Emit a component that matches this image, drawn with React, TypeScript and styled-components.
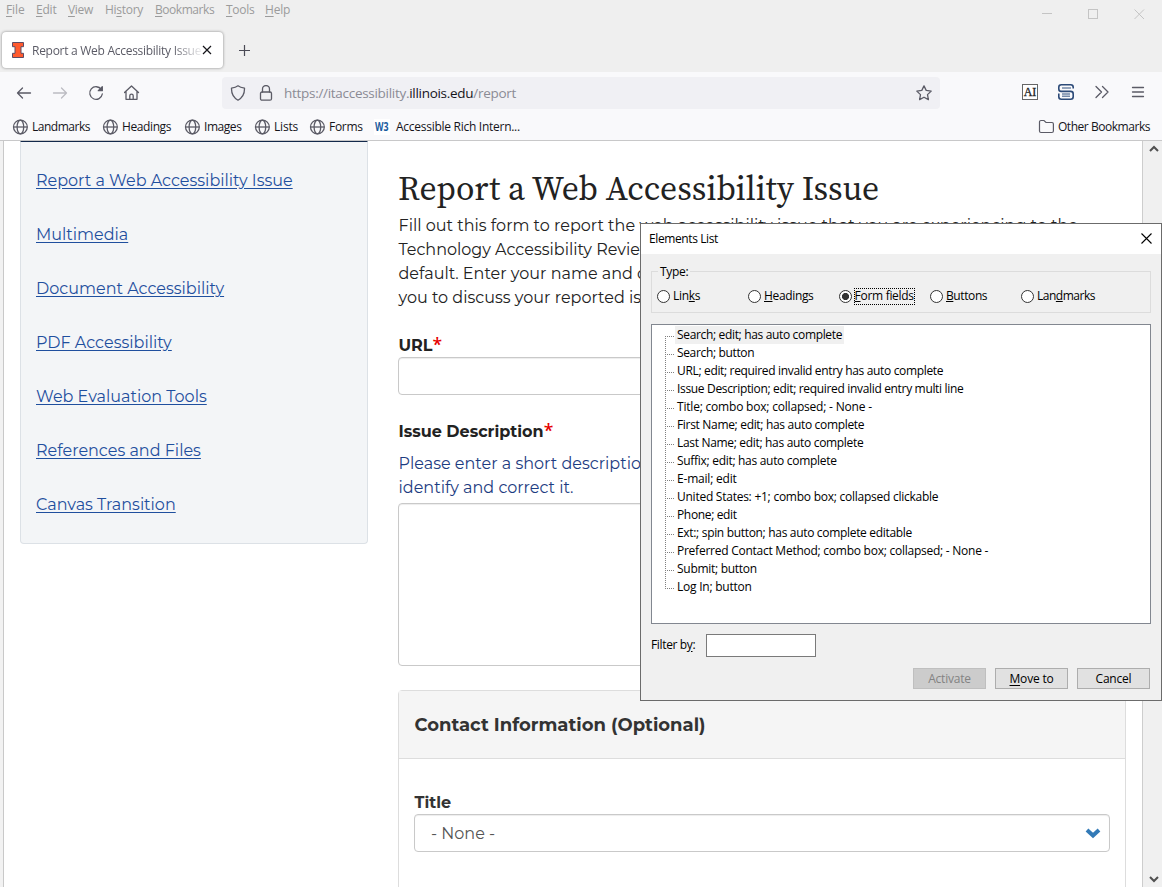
import React from 'react';
import styled, { createGlobalStyle, css } from 'styled-components';

const ui = `"Segoe UI", "Open Sans", "Noto Sans", sans-serif`;
const body = `Montserrat, Inter, sans-serif`;

const GlobalStyle = createGlobalStyle`
  * { box-sizing: border-box; }
  body { margin: 0; background: #fff; overflow: hidden; }
`;

const Browser = styled.div`
  position: relative;
  width: 1162px;
  height: 887px;
  display: flex;
  flex-direction: column;
  overflow: hidden;
  font: 12px/16px ${ui};
`;

const Text = styled.span<{ $ls?: number }>`
  white-space: nowrap;
  letter-spacing: ${(p) => p.$ls ?? 0}px;
`;

/* ---------- window chrome ---------- */

const TitleArea = styled.div`
  height: 72px;
  flex: none;
  background: #efefef;
  display: flex;
  justify-content: space-between;
`;

const TitleLeft = styled.div`
  display: flex;
  flex-direction: column;
`;

const MenuBar = styled.div`
  display: flex;
  height: 32px;
  padding: 2px 0 0 6px;
  color: #9b9b9b;
`;

const MenuItem = styled.span<{ $w: number; $ls: number }>`
  width: ${(p) => p.$w}px;
  letter-spacing: ${(p) => p.$ls}px;
  white-space: nowrap;
  u { text-underline-offset: 2px; }
`;

const WindowButtons = styled.div`
  display: flex;
  gap: 35px;
  padding: 8px 17px 0 0;
`;

const TabStrip = styled.div`
  display: flex;
  align-items: center;
  height: 36px;
  padding-left: 2px;
`;

const Tab = styled.div`
  width: 221px;
  height: 36px;
  display: flex;
  align-items: center;
  padding: 0 9px 0 9px;
  background: #fff;
  border-radius: 4px;
  box-shadow: 0 0 3px rgba(0, 0, 0, 0.45);
  color: #5b5b66;
`;

const TabTitle = styled.span`
  width: 170px;
  margin: 2px 0 0 7px;
  white-space: nowrap;
  letter-spacing: -0.28px;
  mask-image: linear-gradient(to right, #000 140px, transparent 172px);
`;

const NewTab = styled.svg`
  margin: 1px 0 0 16px;
`;

const NavBar = styled.div`
  height: 41px;
  flex: none;
  background: #f9f9fb;
  display: flex;
  align-items: center;
  padding: 0 16px 0 16px;
`;

const NavButtons = styled.div`
  display: flex;
  gap: 20px;
  width: 206px;
  color: #5b5b66;
`;

const UrlBar = styled.div`
  width: 718px;
  height: 32px;
  border-radius: 4px;
  background: #f0f0f4;
  display: flex;
  align-items: center;
  padding: 0 8px;
  gap: 12px;
  color: #5b5b66;
`;

const Url = styled.span`
  flex: 1;
  margin-left: -2px;
  font-size: 13.5px;
  line-height: 20px;
  letter-spacing: -0.29px;
  color: #8b8b94;
  b { font-weight: 400; color: #15141a; }
`;

const ToolIcons = styled.div`
  display: flex;
  gap: 20px;
  margin: -2px 0 0 auto;
  color: #5b5b66;
`;

const BookmarksBar = styled.div`
  height: 28px;
  flex: none;
  background: #f9f9fb;
  border-bottom: 1px solid #c8c8c9;
  display: flex;
  align-items: center;
  padding: 0 12px 0 12px;
  color: #15141a;
`;

const Bookmark = styled.div<{ $w?: number; $gap?: number }>`
  display: flex;
  align-items: center;
  gap: ${(p) => p.$gap ?? 4}px;
  ${(p) => (p.$w ? css`width: ${p.$w}px;` : css`margin-left: auto;`)}
`;

/* ---------- page ---------- */

const Viewport = styled.div`
  flex: 1;
  min-height: 0;
  display: flex;
  background: #fff;
`;

const LeftEdge = styled.div`
  width: 4px;
  background: #f2f2f2;
  border-right: 1px solid #c9c9c9;
`;

const Page = styled.div`
  flex: 1;
  display: flex;
  align-items: flex-start;
  padding-left: 16px;
  overflow: hidden;
  font: 16px/24px ${body};
  color: #222;
`;

const ScrollBar = styled.div`
  width: 20px;
  background: #f0f0f0;
  border-left: 1px solid #cdcdcd;
  display: flex;
  flex-direction: column;
  justify-content: space-between;
  align-items: center;
  padding: 4px 0 4px 2px;
`;

const SideNav = styled.nav`
  width: 348px;
  height: 403px;
  padding: 27px 15px 0;
  background: #f3f5f7;
  border: 1px solid #dce1e6;
  border-top: 1px solid #13294b;
  border-radius: 0 0 4px 4px;
  display: flex;
  flex-direction: column;
  gap: 30px;
`;

const SideLink = styled.a`
  color: #1f4f9e;
  text-decoration: underline;
  text-underline-offset: 2px;
  white-space: nowrap;
`;

const Main = styled.main`
  width: 728px;
  margin-left: 30px;
  flex: none;
`;

const Heading = styled.h1`
  margin: 0;
  padding-top: 25px;
  height: 73px;
  font: 400 33.6px/44px "Source Serif 4", "Noto Serif", "Liberation Serif", serif;
`;

const Line = styled.div`
  white-space: nowrap;
  padding-left: 0.5px;
`;

const Label = styled.label<{ $top: number }>`
  display: block;
  margin: ${(p) => p.$top}px 0 -1px;
  padding-left: 0.5px;
  font-weight: 700;
  line-height: 24px;
`;

const Required = styled.span`
  color: #e60000;
  font-family: "Open Sans", sans-serif;
  font-size: 17.5px;
  font-weight: 600;
  line-height: 1;
`;

const field = css`
  border: 1px solid #c9c9c9;
  border-radius: 4px;
  background: #fff;
  box-shadow: inset 0 1px 1px rgba(0, 0, 0, 0.075);
`;

const Input = styled.div<{ $h: number }>`
  ${field}
  height: ${(p) => p.$h}px;
`;

const Help = styled.div`
  margin: 9px 0 3px;
  color: #1d3c81;
`;

const Fieldset = styled.section`
  margin-top: 24px;
  height: 300px;
  border: 1px solid #ddd;
  border-radius: 4px 4px 0 0;
`;

const FieldsetTitle = styled.h2`
  margin: 0;
  height: 68px;
  padding: 0 15.5px;
  display: flex;
  align-items: center;
  background: #f5f5f5;
  border-bottom: 1px solid #ddd;
  font-size: 18px;
  font-weight: 700;
  color: #333;
`;

const FieldsetBody = styled.div`
  padding: 0 15px;
  color: #333;
`;

const Select = styled.div`
  ${field}
  height: 38px;
  padding: 1px 8px 0 16px;
  display: flex;
  align-items: center;
  justify-content: space-between;
  color: #555;
`;

/* ---------- dialog ---------- */

const Dialog = styled.div`
  position: absolute;
  left: 640px;
  top: 223px;
  width: 522px;
  height: 478px;
  border: 1px solid #6b6b6b;
  background: #f0f0f0;
  color: #000;
  display: flex;
  flex-direction: column;
`;

const DialogTitle = styled.div`
  height: 30px;
  flex: none;
  background: #fff;
  padding: 0 9px 0 8px;
  display: flex;
  align-items: center;
  justify-content: space-between;
`;

const CloseIcon = styled.svg`
  margin: -2px 0.5px 0 0;
`;

const DialogBody = styled.div`
  flex: 1;
  padding: 17px 10px 11px;
  display: flex;
  flex-direction: column;
`;

const Group = styled.div`
  height: 42px;
  border: 1px solid #dcdcdc;
`;

const Legend = styled.div`
  width: 32px;
  height: 16px;
  margin: -8px 0 0 6px;
  padding-left: 2px;
  background: #f0f0f0;
  letter-spacing: -0.3px;
`;

const Radios = styled.div`
  display: flex;
  padding: 8px 0 0 5px;
`;

const Radio = styled.div`
  width: 91px;
  display: flex;
  align-items: center;
  gap: 1px;
`;

const Dot = styled.span<{ $on?: boolean }>`
  flex: none;
  width: 13px;
  height: 13px;
  margin-top: -1px;
  border: 1px solid #333;
  border-radius: 50%;
  background: ${(p) => (p.$on ? 'radial-gradient(circle, #333 3.2px, #fff 3.9px)' : '#fff')};
`;

const RadioText = styled.span<{ $focus?: boolean; $ls: number }>`
  flex: none;
  height: 17px;
  line-height: 14px;
  padding: 0 0 0 1px;
  border: 1px ${(p) => (p.$focus ? 'dotted #000' : 'solid transparent')};
  white-space: nowrap;
  letter-spacing: ${(p) => p.$ls}px;
  margin-right: -10px;
  ${(p) => p.$focus && css`margin-left: 0.6px; padding: 0;`}
`;

const Tree = styled.div`
  margin-top: 11px;
  height: 300px;
  border: 1px solid #828790;
  background: #fff;
  padding: 1px 0 0 13px;
`;

const TreeItem = styled.div`
  height: 18px;
  display: flex;
  align-items: center;
`;

const Branch = styled.svg`
  flex: none;
  margin-right: 1px;
`;

const TreeText = styled.span<{ $sel?: boolean; $ls: number }>`
  height: 18px;
  line-height: 18px;
  padding: 0 2px;
  white-space: nowrap;
  letter-spacing: ${(p) => p.$ls}px;
  background: ${(p) => (p.$sel ? '#f0f0f0' : 'transparent')};
`;

const FilterRow = styled.div`
  display: flex;
  align-items: center;
  margin-top: 10px;
`;

const FilterLabel = styled.span`
  width: 55px;
  margin-top: -2px;
  letter-spacing: -0.35px;
  u { text-underline-offset: 2px; }
`;

const FilterInput = styled.div`
  width: 110px;
  height: 23px;
  border: 1px solid #7a7a7a;
  background: #fff;
`;

const Buttons = styled.div`
  display: flex;
  justify-content: flex-end;
  gap: 9px;
  margin-top: 11px;
  padding-right: 1px;
`;

const Button = styled.div<{ $disabled?: boolean }>`
  width: 73px;
  height: 21px;
  border: 1px solid ${(p) => (p.$disabled ? '#bfbfbf' : '#adadad')};
  background: ${(p) => (p.$disabled ? '#ccc' : '#e1e1e1')};
  color: ${(p) => (p.$disabled ? '#838383' : '#000')};
  text-align: center;
  line-height: 20px;
  letter-spacing: -0.2px;
  u { text-underline-offset: 2px; }
`;

/* ---------- icons ---------- */

const Globe = () => (
  <svg width="16" height="16" viewBox="0 0 16 16" fill="none" stroke="#5b5b66" strokeWidth="1.3">
    <circle cx="8.4" cy="8" r="6.9" />
    <ellipse cx="8.4" cy="8" rx="3.3" ry="6.9" />
    <path d="M1.6 8h13.6" />
  </svg>
);

const NavIcon = ({ children, faded }: { children: React.ReactNode; faded?: boolean }) => (
  <svg width="16" height="16" viewBox="0 0 16 16" fill="none" stroke={faded ? '#bcbcc2' : '#5b5b66'} strokeWidth="1.3" strokeLinecap="round" strokeLinejoin="round">
    {children}
  </svg>
);

const menus: [React.ReactNode, number, number][] = [
  [<><u>F</u>ile</>, 30, -0.1],
  [<><u>E</u>dit</>, 32, -0.2],
  [<><u>V</u>iew</>, 37, -0.3],
  [<>Hi<u>s</u>tory</>, 50, -0.29],
  [<><u>B</u>ookmarks</>, 71, -0.45],
  [<><u>T</u>ools</>, 39, -0.3],
  [<><u>H</u>elp</>, 30, -0.2],
];

const bookmarks: [string, number, number][] = [
  ['Landmarks', 90, -0.48],
  ['Headings', 82, -0.4],
  ['Images', 70, -0.45],
  ['Lists', 55, -0.2],
  ['Forms', 65, -0.3],
];

const sideLinks = [
  'Report a Web Accessibility Issue',
  'Multimedia',
  'Document Accessibility',
  'PDF Accessibility',
  'Web Evaluation Tools',
  'References and Files',
  'Canvas Transition',
];

const elements: [string, number][] = [
  ['Search; edit; has auto complete', -0.34],
  ['Search; button', -0.35],
  ['URL; edit; required invalid entry has auto complete', -0.34],
  ['Issue Description; edit; required invalid entry multi line', -0.33],
  ['Title; combo box; collapsed; - None -', -0.2],
  ['First Name; edit; has auto complete', -0.32],
  ['Last Name; edit; has auto complete', -0.32],
  ['Suffix; edit; has auto complete', -0.3],
  ['E-mail; edit', -0.2],
  ['United States: +1; combo box; collapsed clickable', -0.25],
  ['Phone; edit', -0.35],
  ['Ext:; spin button; has auto complete editable', -0.32],
  ['Preferred Contact Method; combo box; collapsed; - None -', -0.25],
  ['Submit; button', -0.28],
  ['Log In; button', -0.24],
];

const types: [React.ReactNode, number, boolean][] = [
  [<>Lin<u>k</u>s</>, -0.3, false],
  [<><u>H</u>eadings</>, -0.35, false],
  [<><u>F</u>orm fields</>, -0.3, true],
  [<><u>B</u>uttons</>, -0.4, false],
  [<>Lan<u>d</u>marks</>, -0.48, false],
];

export default function App() {
  return (
    <Browser>
      <GlobalStyle />
      <TitleArea>
        <TitleLeft>
          <MenuBar>
            {menus.map(([label, w, ls], i) => (
              <MenuItem key={i} $w={w} $ls={ls}>{label}</MenuItem>
            ))}
          </MenuBar>
          <TabStrip>
            <Tab>
              <svg width="14" height="16" viewBox="0 0 14 16">
                <path d="M1.5.5h11v4.2H10v6.6h2.5v4.2h-11v-4.2H4V4.700H1.500z" fill="#ff5a2e" stroke="#5d4a63" />
              </svg>
              <TabTitle>Report a Web Accessibility Issue</TabTitle>
              <svg width="10" height="10" viewBox="0 0 10 10" stroke="#15141a" strokeWidth="1.2">
                <path d="M1 1l8 8M9 1l-8 8" />
              </svg>
            </Tab>
            <NewTab width="12" height="12" viewBox="0 0 12 12" stroke="#4a4a55" strokeWidth="1.2">
              <path d="M5.500 0v11M0 5.500h11" />
            </NewTab>
          </TabStrip>
        </TitleLeft>
        <WindowButtons>
          <svg width="11" height="11" stroke="#c4c4c4" fill="none"><path d="M0 5.500h10" /></svg>
          <svg width="11" height="11" stroke="#c4c4c4" fill="none"><rect x=".5" y="1.500" width="9" height="9" /></svg>
          <svg width="11" height="11" stroke="#c4c4c4" fill="none"><path d="M.5 1.500l9.500 9.500M10 1.500L.5 11" /></svg>
        </WindowButtons>
      </TitleArea>

      <NavBar>
        <NavButtons>
          <NavIcon><path d="M14.500 8h-13M6.500 3L1.500 8l5 5" /></NavIcon>
          <NavIcon faded><path d="M1.500 8h13M9.500 3l5 5-5 5" /></NavIcon>
          <NavIcon>
            <path d="M13.300 4.500A6.300 6.300 0 1 0 14.300 9" />
            <path d="M14.300 1.700v4h-4z" fill="#5b5b66" />
          </NavIcon>
          <NavIcon>
            <path d="M.5 7.500l7-6.500 7 6.500M2 6.500v7.800h11V6.500M5.800 14v-3.200a1.700 1.700 0 0 1 3.400 0V14" />
          </NavIcon>
        </NavButtons>
        <UrlBar>
          <NavIcon><path d="M8 .8c2 1.600 4 2 6.500 2.300.2 5.500-1.500 9.400-6.500 12.100C3 12.500 1.300 8.600 1.500 3.100 4 2.800 6 2.400 8 .8z" /></NavIcon>
          <NavIcon>
            <rect x="2.500" y="7" width="11" height="8.200" rx="1.500" />
            <path d="M4.500 7V4a3.500 3.500 0 0 1 7 0v3" />
          </NavIcon>
          <Url>https://itaccessibility.<b>illinois.edu</b>/report</Url>
          <NavIcon><path d="M8 .9l2.200 4.500 5 .7-3.700 3.500.9 5L8 12.200l-4.400 2.400.9-5L.8 6.100l5-.7z" /></NavIcon>
        </UrlBar>
        <ToolIcons>
          <svg width="16" height="16" viewBox="0 0 16 16">
            <rect x=".5" y=".5" width="15" height="15" fill="#fff" stroke="#666" />
            <text x="8" y="12" textAnchor="middle" fontFamily="Liberation Serif" fontSize="12" fill="#222" stroke="#222" strokeWidth=".3">AI</text>
          </svg>
          <svg width="16" height="16" viewBox="0 0 16 16" fill="none" stroke="#2c4a78" strokeWidth="1.600">
            <path d="M15.200 4.500V3.300A2.500 2.500 0 0 0 12.700.8H3.300A2.500 2.500 0 0 0 .8 3.300v1.600a2.500 2.500 0 0 0 2.500 2.500h9.400a2.500 2.500 0 0 1 2.500 2.500v2.800a2.500 2.500 0 0 1-2.500 2.500H3.300a2.500 2.500 0 0 1-2.500-2.500V9.500" />
            <path d="M4 4h9M4 10h8M4 12.300h8" stroke="#7388a8" strokeWidth="1.500" />
          </svg>
          <NavIcon><path d="M2 2.500L7.500 8 2 13.500M8.500 2.500L14 8l-5.500 5.500" /></NavIcon>
          <NavIcon><path d="M2.500 3.500h11M2.500 8h11M2.500 12.500h11" /></NavIcon>
        </ToolIcons>
      </NavBar>

      <BookmarksBar>
        {bookmarks.map(([name, w, ls]) => (
          <Bookmark key={name} $w={w}>
            <Globe />
            <Text $ls={ls}>{name}</Text>
          </Bookmark>
        ))}
        <Bookmark $w={160} $gap={6}>
          <svg width="16" height="16" viewBox="0 0 16 16">
            <rect width="16" height="16" fill="#fff" />
            <text x="1" y="12" fontFamily="Open Sans" fontWeight="700" fontSize="12" textLength="13.500" lengthAdjust="spacingAndGlyphs" fill="#1a5c9e">W3</text>
          </svg>
          <Text $ls={-0.27}>Accessible Rich Intern...</Text>
        </Bookmark>
        <Bookmark $gap={3.5}>
          <svg width="16" height="16" viewBox="0 0 16 16" fill="none" stroke="#5b5b66" strokeWidth="1.200">
            <path d="M1.500 12v-9A1.500 1.500 0 0 1 3 1.500h3l2 2h6A1.500 1.500 0 0 1 15.400 5v7a1.500 1.500 0 0 1-1.500 1.500H3A1.500 1.500 0 0 1 1.500 12z" />
          </svg>
          <Text $ls={-0.46}>Other Bookmarks</Text>
        </Bookmark>
      </BookmarksBar>

      <Viewport>
        <LeftEdge />
        <Page>
          <SideNav>
            {sideLinks.map((name) => (
              <span key={name}><SideLink>{name}</SideLink></span>
            ))}
          </SideNav>
          <Main>
            <Heading>Report a Web Accessibility Issue</Heading>
            <Line>Fill out this form to report the web accessibility issue that you are experiencing to the</Line>
            <Line>Technology Accessibility Review</Line>
            <Line>default. Enter your name and contact</Line>
            <Line>you to discuss your reported issue.</Line>
            <Label $top={24}>URL<Required>*</Required></Label>
            <Input $h={38} />
            <Label $top={25}>Issue Description<Required>*</Required></Label>
            <Help>
              <Line>Please enter a short description</Line>
              <Line>identify and correct it.</Line>
            </Help>
            <Input $h={163} />
            <Fieldset>
              <FieldsetTitle>Contact Information (Optional)</FieldsetTitle>
              <FieldsetBody>
                <Label $top={32}>Title</Label>
                <Select>
                  - None -
                  <svg width="16" height="12" viewBox="0 0 16 12" fill="none" stroke="#337ab7" strokeWidth="4">
                    <path d="M2 2l6 5.500 6-5.500" />
                  </svg>
                </Select>
              </FieldsetBody>
            </Fieldset>
          </Main>
        </Page>
        <ScrollBar>
          <svg width="10" height="7" fill="none" stroke="#505050" strokeWidth="2"><path d="M1 6l4-4 4 4" /></svg>
          <svg width="10" height="7" fill="none" stroke="#505050" strokeWidth="2"><path d="M1 1l4 4 4-4" /></svg>
        </ScrollBar>
      </Viewport>

      <Dialog>
        <DialogTitle>
          <Text $ls={-0.39}>Elements List</Text>
          <CloseIcon width="11" height="11" stroke="#000" strokeWidth="1.100"><path d="M.5.5l10 10M10.500.5l-10 10" /></CloseIcon>
        </DialogTitle>
        <DialogBody>
          <Group>
            <Legend>Type:</Legend>
            <Radios>
              {types.map(([label, ls, on], i) => (
                <Radio key={i}>
                  <Dot $on={on} />
                  <RadioText $focus={on} $ls={ls}>{label}</RadioText>
                </Radio>
              ))}
            </Radios>
          </Group>
          <Tree>
            {elements.map(([name, ls], i) => (
              <TreeItem key={name}>
                <Branch width="9" height="18" stroke="#808080" strokeDasharray="1 1">
                  <path d={`M.5 ${i === 0 ? 10 : 0}V${i === elements.length - 1 ? 11 : 18}M0 10.500h9`} />
                </Branch>
                <TreeText $sel={i === 0} $ls={ls}>{name}</TreeText>
              </TreeItem>
            ))}
          </Tree>
          <FilterRow>
            <FilterLabel>Filter b<u>y</u>:</FilterLabel>
            <FilterInput />
          </FilterRow>
          <Buttons>
            <Button $disabled>Activate</Button>
            <Button><u>M</u>ove to</Button>
            <Button>Cancel</Button>
          </Buttons>
        </DialogBody>
      </Dialog>
    </Browser>
  );
}
